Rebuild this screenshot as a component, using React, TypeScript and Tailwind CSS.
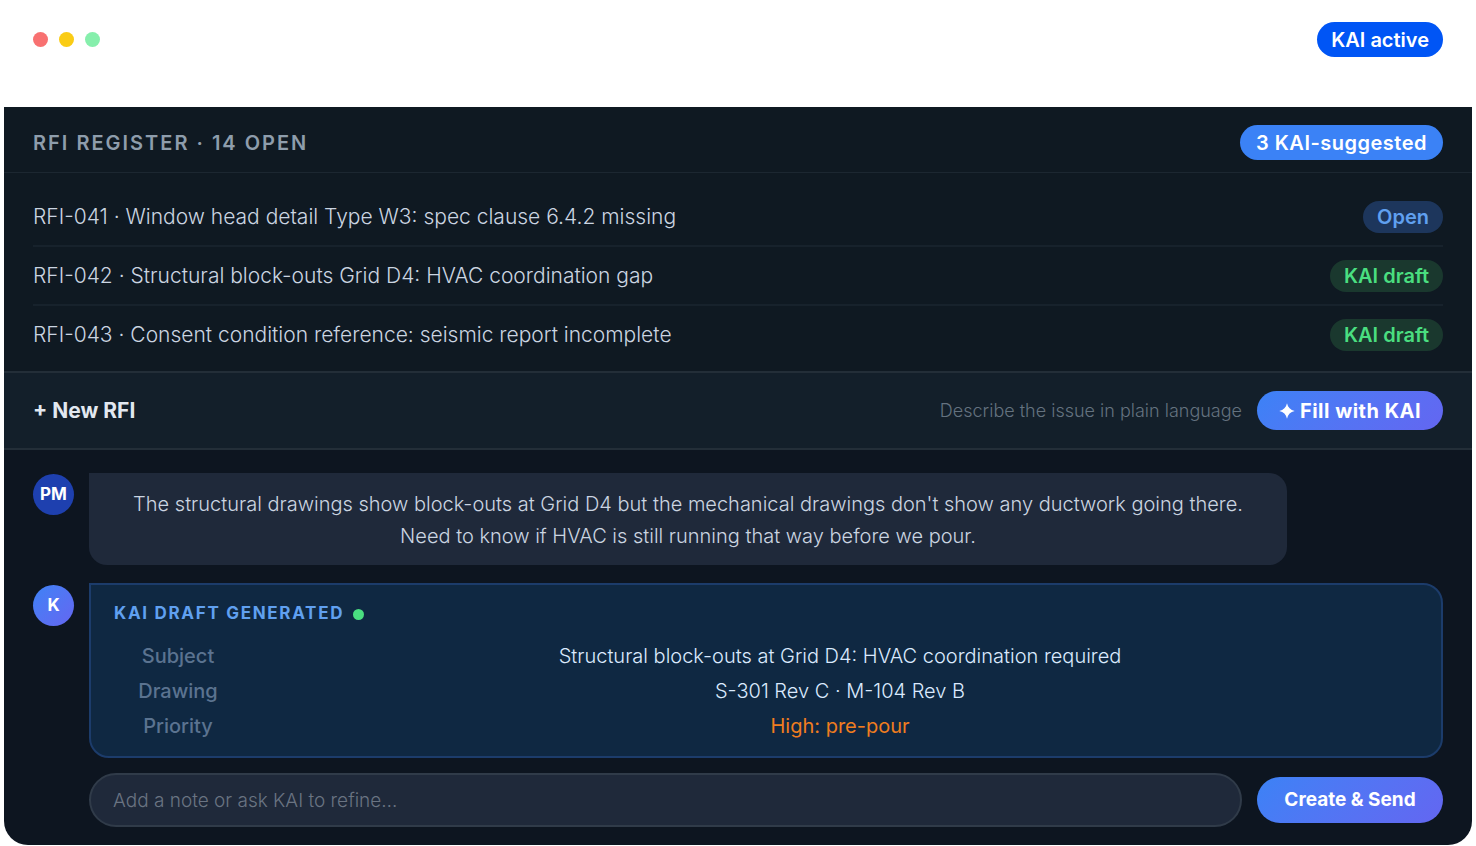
import { useState } from 'react';

interface Rfi {
  id: string;
  title: string;
  status: 'Open' | 'KAI draft';
}

const rfis: Rfi[] = [
  { id: 'RFI-041', title: 'Window head detail Type W3: spec clause 6.4.2 missing', status: 'Open' },
  { id: 'RFI-042', title: 'Structural block-outs Grid D4: HVAC coordination gap', status: 'KAI draft' },
  { id: 'RFI-043', title: 'Consent condition reference: seismic report incomplete', status: 'KAI draft' },
];

const draftFields = [
  { label: 'Subject', value: 'Structural block-outs at Grid D4: HVAC coordination required', color: 'font-light text-[#dbeafe]' },
  { label: 'Drawing', value: 'S-301 Rev C · M-104 Rev B', color: 'font-light text-[#dbeafe]' },
  { label: 'Priority', value: 'High: pre-pour', color: 'text-[#f07d1f]' },
];

function StatusBadge({ status }: { status: Rfi['status'] }) {
  const colors = status === 'Open' ? 'bg-[#1d365c] text-[#60a0f0]' : 'bg-[#1a382e] text-[#4ade80]';
  return (
    <span className={`flex h-8 items-center rounded-full px-[14px] text-xl font-semibold ${colors}`}>
      {status}
    </span>
  );
}

function Sparkle() {
  return (
    <svg viewBox="0 0 16 16" className="h-4 w-4 fill-current" aria-hidden="true">
      <path d="M8 0.3C9 4.6 11.4 7 15.7 8C11.4 9 9 11.4 8 15.7C7 11.4 4.6 9 0.3 8C4.6 7 7 4.6 8 0.3Z" />
    </svg>
  );
}

export default function App() {
  const [note, setNote] = useState('');

  return (
    <div className="bg-white px-1 font-['Inter',sans-serif]">
      <header className="flex h-[107px] items-start justify-between px-[29px] pt-[22px]">
        <div className="flex h-[35px] items-center gap-[11px]">
          <span className="h-[15px] w-[15px] rounded-full bg-[#f87171]" />
          <span className="h-[15px] w-[15px] rounded-full bg-[#facc15]" />
          <span className="h-[15px] w-[15px] rounded-full bg-[#86efac]" />
        </div>
        <span className="flex h-[35px] items-center rounded-full bg-[#0055f5] px-[14px] text-xl font-semibold text-white">
          KAI active
        </span>
      </header>

      <main className="overflow-hidden rounded-b-3xl bg-[#0d1520]">
        {/* Register */}
        <section className="bg-[#0f1922]">
          <div className="flex h-[66px] items-center justify-between border-b border-[#1c2731] px-[29px] pt-[6px]">
            <h1 className="text-xl font-semibold tracking-widest text-[#8e9dac]">RFI REGISTER · 14 OPEN</h1>
            <span className="flex h-[35px] items-center rounded-full bg-[#3b82f6] px-4 text-xl font-semibold tracking-wide text-white">
              3 KAI-suggested
            </span>
          </div>
          <ul className="px-[29px] pt-[15px] pb-[6px]">
            {rfis.map((rfi) => (
              <li
                key={rfi.id}
                className="flex h-[59px] items-center justify-between border-b-2 border-[#17222c] last:border-transparent"
              >
                <span className="text-[21px] font-light text-[#cbd5e1]">
                  {rfi.id} · {rfi.title}
                </span>
                <StatusBadge status={rfi.status} />
              </li>
            ))}
          </ul>
        </section>

        {/* New RFI */}
        <section className="flex h-[79px] items-center justify-between border-y-2 border-[#232e38] bg-[#131f2a] px-[29px]">
          <h2 className="text-[21px] font-bold text-[#e2e8f0]">+ New RFI</h2>
          <div className="flex items-center gap-[15px]">
            <span className="text-lg font-light text-[#64727f]">Describe the issue in plain language</span>
            <button className="flex h-[39px] w-[186px] items-center justify-center gap-[5px] rounded-full bg-linear-135 from-[#3b82f6] to-[#6366f1] text-xl font-bold tracking-wide text-white">
              <Sparkle />
              Fill with KAI
            </button>
          </div>
        </section>

        {/* Conversation */}
        <section className="px-[29px] pt-[23px] pb-[18px]">
          <div className="flex items-start gap-[15px]">
            <div className="mt-px flex h-[41px] w-[41px] shrink-0 items-center justify-center rounded-full bg-[#1e40af] text-[17px] font-bold text-white">
              PM
            </div>
            <p className="mr-[156px] flex-1 rounded-[18px] rounded-tl-none bg-[#1f293a] px-6 pt-[15px] pb-[13px] text-center text-xl leading-8 font-light text-[#cbd5e1]">
              The structural drawings show block-outs at Grid D4 but the mechanical drawings don't show any ductwork going
              there. Need to know if HVAC is still running that way before we pour.
            </p>
          </div>

          <div className="mt-[18px] flex items-start gap-[15px]">
            <div className="mt-[2px] flex h-[41px] w-[41px] shrink-0 items-center justify-center rounded-full bg-linear-135 from-[#3b82f6] to-[#6366f1] text-[17px] font-bold text-white">
              K
            </div>
            <div className="flex-1 rounded-[20px] rounded-tl-none border-2 border-[#1c3c6b] bg-[#0f2842] px-[23px] pt-[14px] pb-[13px]">
              <h3 className="flex h-[30px] items-center gap-[9px] text-[17px] font-bold tracking-widest text-[#60a0f0]">
                KAI DRAFT GENERATED
                <span className="h-[11px] w-[11px] rounded-full bg-[#4ade80]" />
              </h3>
              <table className="mt-[9px] w-full table-fixed text-center text-xl">
                <tbody>
                  {draftFields.map((field) => (
                    <tr key={field.label} className="h-[35px]">
                      <th scope="row" className="w-[128px] font-medium text-[#5b7390]">
                        {field.label}
                      </th>
                      <td className={`pl-5 ${field.color}`}>{field.value}</td>
                    </tr>
                  ))}
                </tbody>
              </table>
            </div>
          </div>

          <form className="mt-[15px] ml-[56px] flex items-center gap-[15px]" onSubmit={(e) => e.preventDefault()}>
            <input
              type="text"
              aria-label="Note"
              value={note}
              onChange={(e) => setNote(e.target.value)}
              placeholder="Add a note or ask KAI to refine…"
              className="h-[54px] min-w-0 flex-1 rounded-full border-2 border-[#303b49] bg-[#1f293a] px-[22px] text-[19px] font-light text-[#cbd5e1] outline-none placeholder:text-[#6a7482]"
            />
            <button
              type="submit"
              className="h-[46px] w-[186px] rounded-full bg-linear-135 from-[#3b82f6] to-[#6366f1] text-[19px] font-bold text-white"
            >
              Create &amp; Send
            </button>
          </form>
        </section>
      </main>
    </div>
  );
}
